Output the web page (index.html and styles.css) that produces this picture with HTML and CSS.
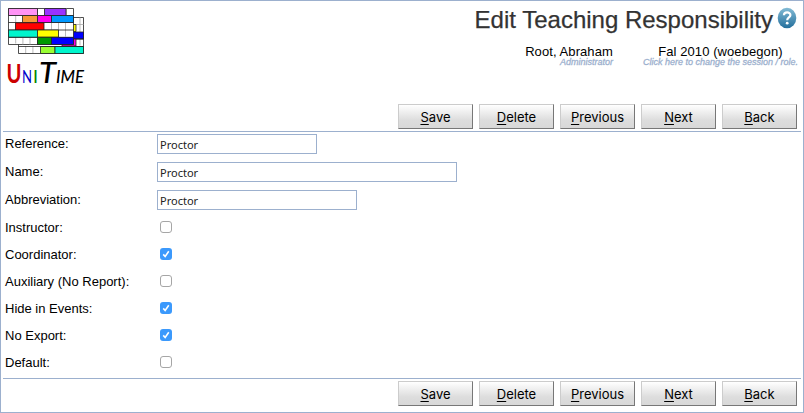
FILE: index.html
```
<!DOCTYPE html>
<html lang="en">
<head>
<meta charset="utf-8">
<title>Edit Teaching Responsibility</title>
<link rel="stylesheet" href="styles.css">
</head>
<body>
<main class="page">
  <header class="header">
    <svg class="logo" width="84" height="84" viewBox="0 0 84 84" aria-label="UniTime">
      <g stroke="#222" stroke-width=".8">
        <path fill="#fff" d="M15.5 14.5h65v36h-65z"/>
        <path fill="none" stroke="#aaa" d="M22.700 43v7M29.900 43v7M70 14.500v28M77 14.500v28M70 21.500h10.500"/>
        <path fill="#ff0" d="M66 21.500h7v7h-7z"/>
        <path fill="#00f" d="M66 29h14.500v7H66z"/>
        <path fill="#f0d" d="M59 36h14v7H59z"/>
        <path fill="#9f3" d="M37.500 43.500H52v7H37.500z"/>
        <path fill="#00f5cc" d="M52 43.500h28.500v7H52z"/>
        <path fill="none" d="M15.500 43.500h65M73 36h7.500"/>
        <path fill="#fff" d="M5.500 5.500h65v36h-65z"/>
        <path fill="none" stroke="#aaa" d="M12.700 12.500v28M19.900 34.500v7M27 34.500v7M41.500 5.500v7M63.500 5.500v7M48.500 19.500v7M55.500 19.500v14M62.500 19.500v14"/>
        <path fill="none" d="M5.500 12.500h65M5.500 19.500h65M5.500 27h65M5.500 34.500h65M34.500 5.500v36"/>
        <path fill="#ff93f5" d="M5.500 5.500h29v7h-29z"/>
        <path fill="#9933ff" d="M41.500 5.500h21.500v7H41.500z"/>
        <path fill="#f79838" d="M19.500 12.500h15v7h-15z"/>
        <path fill="#f0e" d="M34.500 12.500h14v7h-14z"/>
        <path fill="#09f" d="M48.500 12.500h22v7h-22z"/>
        <path fill="#f00" d="M12.500 19.800H41V27H12.500z"/>
        <path fill="#00f5cc" d="M5.500 27h29v7.200h-29z"/>
        <path fill="#ff0" d="M34.500 27h21v7.200h-21z"/>
        <path fill="#090" d="M34.500 34.300h14v7.200h-14z"/>
        <path fill="#00f" d="M48.500 34.300h22v7.200h-22z"/>
      </g>
      <g class="wordmark">
        <text class="u" x="3.500" y="79.500" font-size="26" textLength="15" lengthAdjust="spacingAndGlyphs">U</text>
        <text class="n" x="19" y="80" font-size="17" textLength="10" lengthAdjust="spacingAndGlyphs">N</text>
        <text class="i" x="30" y="80" font-size="18">I</text>
        <text class="t" x="36" y="79.500" font-size="28" textLength="17" lengthAdjust="spacingAndGlyphs">T</text>
        <text class="t" x="53" y="79.500" font-size="17" textLength="28" lengthAdjust="spacingAndGlyphs">IME</text>
      </g>
    </svg>
    <div class="heading">
      <div class="title-line">
        <h1>Edit Teaching Responsibility</h1>
        <svg class="help" width="20" height="22" viewBox="0 0 20 22" aria-label="Help">
          <defs><linearGradient id="help-fill" x2="0" y2="1"><stop stop-color="#83bbd5"/><stop offset="1" stop-color="#246f9c"/></linearGradient></defs>
          <ellipse cx="10" cy="11" rx="9.300" ry="10.300" fill="url(#help-fill)"/>
          <path d="M6.900 8.200C7 4.600 13.400 4.500 13.400 8.100C13.400 10.600 10.200 10.400 10.200 13.300" fill="none" stroke="#fff" stroke-width="2.200"/>
          <circle cx="10.200" cy="16.200" r="1.400" fill="#fff"/>
        </svg>
      </div>
      <div class="session">
        <div class="user"><span class="main-text">Root, Abraham</span><span class="hint">Administrator</span></div>
        <div class="term"><span class="main-text">Fal 2010 (woebegon)</span><span class="hint">Click here to change the session / role.</span></div>
      </div>
    </div>
  </header>
  <nav class="buttons">
    <button><u>S</u>ave</button><button><u>D</u>elete</button><button><u>P</u>revious</button><button><u>N</u>ext</button><button><u>B</u>ack</button>
  </nav>
  <form class="form">
    <label class="row"><span>Reference:</span><input class="field reference" type="text" value="Proctor"></label>
    <label class="row"><span>Name:</span><input class="field name" type="text" value="Proctor"></label>
    <label class="row"><span>Abbreviation:</span><input class="field abbreviation" type="text" value="Proctor"></label>
    <label class="row check"><span>Instructor:</span><i class="box"></i></label>
    <label class="row check"><span>Coordinator:</span><i class="box on"><svg viewBox="0 0 13 13"><path d="M3.500 6.900 5.600 9.200 9.500 3.600"/></svg></i></label>
    <label class="row check"><span>Auxiliary (No Report):</span><i class="box"></i></label>
    <label class="row check"><span>Hide in Events:</span><i class="box on"><svg viewBox="0 0 13 13"><path d="M3.500 6.900 5.600 9.200 9.500 3.600"/></svg></i></label>
    <label class="row check"><span>No Export:</span><i class="box on"><svg viewBox="0 0 13 13"><path d="M3.500 6.900 5.600 9.200 9.500 3.600"/></svg></i></label>
    <label class="row check"><span>Default:</span><i class="box"></i></label>
  </form>
  <nav class="buttons">
    <button><u>S</u>ave</button><button><u>D</u>elete</button><button><u>P</u>revious</button><button><u>N</u>ext</button><button><u>B</u>ack</button>
  </nav>
</main>
</body>
</html>
```
FILE: styles.css
```
* { box-sizing: border-box; }
body { margin: 0; font-family: "Liberation Sans", Arial, sans-serif; font-size: 13px; color: #000; background: #fff; }
.page { width: 804px; height: 413px; border: 1px solid #9cb0ce; padding: 2px 2px 0 2px; overflow: hidden; }
.header { display: flex; justify-content: space-between; height: 101px; }
.logo { flex: none; }
.wordmark { font-family: Lato, sans-serif; font-weight: 700; }
.wordmark .u { fill: #c00; }
.wordmark .n { fill: #00c; font-weight: 400; }
.wordmark .i { fill: #080; font-weight: 400; }
.wordmark .t { font-style: italic; font-weight: 500; }
.heading { padding-right: 4px; }
.title-line { display: flex; justify-content: flex-end; gap: 4px; height: 41px; padding-top: 3px; }
h1 { margin: 0; font-size: 24px; font-weight: 400; line-height: 27px; color: #333; white-space: nowrap; -webkit-text-stroke: .25px #333; }
.help { margin-top: 1px; }
.session { display: flex; justify-content: flex-end; gap: 30px; margin-right: -1px; white-space: nowrap; }
.session > div { display: flex; flex-direction: column; }
.user { align-items: flex-end; }
.term { align-items: center; }
.main-text { font-size: 13px; line-height: 15px; letter-spacing: .08px; }
.hint { font-size: 9px; font-style: italic; line-height: 7px; color: #9cb0ce; -webkit-text-stroke: .3px #9cb0ce; }
.buttons { display: flex; justify-content: flex-end; gap: 6px; padding-right: 4px; height: 27px; }
button { width: 75px; height: 25px; padding: 1px 0 0; border: 1px solid; border-color: #ccc #777 #777 #ccc; background: linear-gradient(#fff, #ddd 65%, #d8d8d8); font: 13px Inter, sans-serif; color: #000; }
button u { text-underline-offset: 2px; text-decoration-thickness: 1px; text-decoration-skip-ink: none; }
.form { display: flex; flex-direction: column; gap: 8px; border-top: 1px solid #9cb0ce; border-bottom: 1px solid #9cb0ce; padding: 2px 0 6px; margin-bottom: 2px; }
.row { display: grid; grid-template-columns: 152px auto; justify-content: start; align-items: center; height: 20px; padding-left: 2px; line-height: 18px; }
.check { height: 19px; }
.field { height: 20px; border: 1px solid #9cb0ce; padding: 1px 2px 0; font: 11px "Noto Sans", sans-serif; color: #222; background: #fff; outline: 0; }
.reference { width: 160px; }
.name { width: 300px; }
.abbreviation { width: 200px; }
.box { display: block; width: 12px; height: 12px; margin: 0 0 2px 3px; border: 1px solid #a6a6a6; border-radius: 3px; }
.box.on { border: 0; background: #3b99fc; }
.box svg { display: block; width: 12px; height: 12px; fill: none; stroke: #fff; stroke-width: 1.7; }
```
